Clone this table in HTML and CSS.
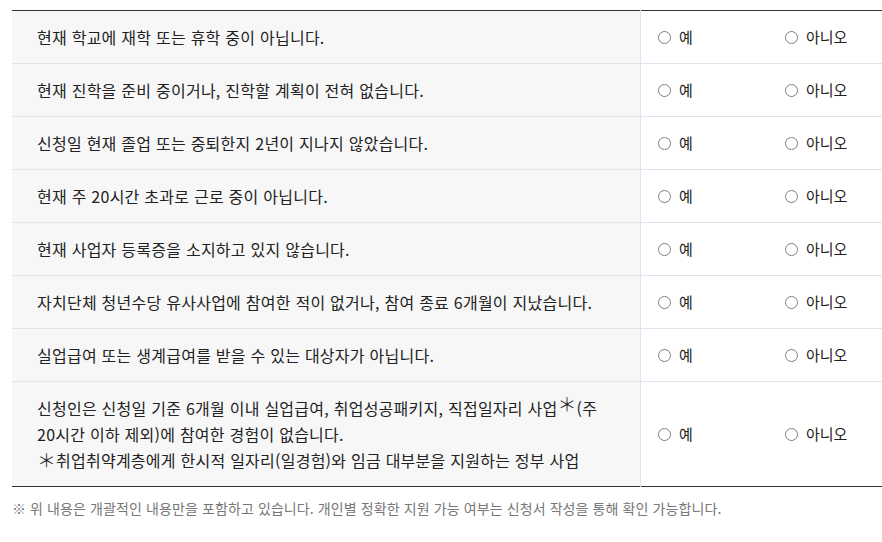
FILE: index.html
```html
<!DOCTYPE html>
<html lang="ko">
<head>
<meta charset="utf-8">
<link rel="stylesheet" href="styles.css">
</head>
<body>
<div class="wrap">
  <table class="check">
    <tbody>
      <tr><td class="q">현재 학교에 재학 또는 휴학 중이 아닙니다.</td><td class="a"><div class="opts"><label class="opt"><input type="radio" name="q1"><span>예</span></label><label class="opt"><input type="radio" name="q1"><span>아니오</span></label></div></td></tr>
      <tr><td class="q">현재 진학을 준비 중이거나, 진학할 계획이 전혀 없습니다.</td><td class="a"><div class="opts"><label class="opt"><input type="radio" name="q2"><span>예</span></label><label class="opt"><input type="radio" name="q2"><span>아니오</span></label></div></td></tr>
      <tr><td class="q">신청일 현재 졸업 또는 중퇴한지 2년이 지나지 않았습니다.</td><td class="a"><div class="opts"><label class="opt"><input type="radio" name="q3"><span>예</span></label><label class="opt"><input type="radio" name="q3"><span>아니오</span></label></div></td></tr>
      <tr><td class="q">현재 주 20시간 초과로 근로 중이 아닙니다.</td><td class="a"><div class="opts"><label class="opt"><input type="radio" name="q4"><span>예</span></label><label class="opt"><input type="radio" name="q4"><span>아니오</span></label></div></td></tr>
      <tr><td class="q">현재 사업자 등록증을 소지하고 있지 않습니다.</td><td class="a"><div class="opts"><label class="opt"><input type="radio" name="q5"><span>예</span></label><label class="opt"><input type="radio" name="q5"><span>아니오</span></label></div></td></tr>
      <tr><td class="q">자치단체 청년수당 유사사업에 참여한 적이 없거나, 참여 종료 6개월이 지났습니다.</td><td class="a"><div class="opts"><label class="opt"><input type="radio" name="q6"><span>예</span></label><label class="opt"><input type="radio" name="q6"><span>아니오</span></label></div></td></tr>
      <tr><td class="q">실업급여 또는 생계급여를 받을 수 있는 대상자가 아닙니다.</td><td class="a"><div class="opts"><label class="opt"><input type="radio" name="q7"><span>예</span></label><label class="opt"><input type="radio" name="q7"><span>아니오</span></label></div></td></tr>
      <tr class="tall"><td class="q">신청인은 신청일 기준 6개월 이내 실업급여, 취업성공패키지, 직접일자리 사업<span class="star">＊</span>(주 20시간 이하 제외)에 참여한 경험이 없습니다.<br><span class="note"><span class="mark">＊</span>취업취약계층에게 한시적 일자리(일경험)와 임금 대부분을 지원하는 정부 사업</span></td><td class="a"><div class="opts"><label class="opt"><input type="radio" name="q8"><span>예</span></label><label class="opt"><input type="radio" name="q8"><span>아니오</span></label></div></td></tr>
    </tbody>
  </table>
  <p class="foot">※ 위 내용은 개괄적인 내용만을 포함하고 있습니다. 개인별 정확한 지원 가능 여부는 신청서 작성을 통해 확인 가능합니다.</p>
</div>
</body>
</html>
```
FILE: styles.css
```css
html, body {
  margin: 0;
  padding: 0;
  background: #fff;
}
body {
  font-family: "Noto Sans CJK KR", "Noto Sans", sans-serif;
  color: #222;
}
.wrap {
  padding: 10px 0 0 12px;
}
.check {
  width: 870px;
  border-collapse: collapse;
  border-top: 1px solid #333;
  border-bottom: 1px solid #333;
}
.check td {
  border-bottom: 1px solid #e1e4ee;
  font-size: 16px;
  line-height: 26px;
  vertical-align: middle;
}
.check tr:last-child td {
  border-bottom: none;
}
.q {
  width: 603px;
  background: #f7f7f8;
  padding: 13px 0 13px 25px;
  border-right: 1px solid #e1e4ee;
  letter-spacing: 0.25px;
  word-break: keep-all;
}
.star {
  display: inline-block;
  font-weight: 300;
  font-size: 19px;
  line-height: 10px;
  letter-spacing: 0;
  position: relative;
  top: -3px;
}
.note {
  padding-left: 0;
}
.mark {
  display: inline-block;
  font-weight: 300;
  font-size: 19px;
  line-height: 10px;
  letter-spacing: 0;
  position: relative;
  top: 1px;
}
.a {
  padding: 0 0 0 17px;
  background: #fff;
}
.opts {
  display: grid;
  grid-template-columns: 127px auto;
}
.opt {
  display: flex;
  align-items: center;
  gap: 8px;
  font-size: 15px;
}
.opt input {
  appearance: none;
  -webkit-appearance: none;
  margin: 0;
  width: 13px;
  height: 13px;
  border: 1px solid #808080;
  border-radius: 50%;
  background: #fff;
  flex: none;
}
.foot {
  margin: 11px 0 0;
  font-size: 14px;
  line-height: 20px;
  color: #777;
  letter-spacing: 0.1px;
}
```
